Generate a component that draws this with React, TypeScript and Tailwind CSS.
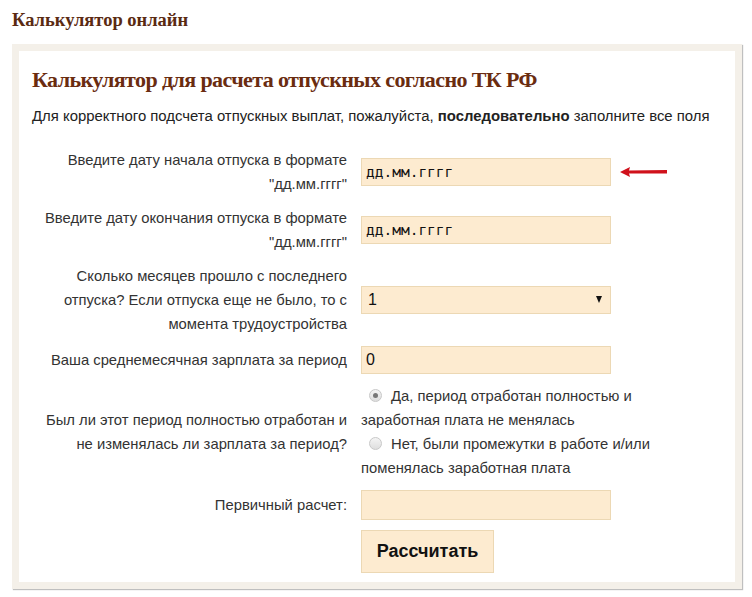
import { useState } from "react";

const sans = "font-['Liberation_Sans',Arial,sans-serif]";
const serif = "font-['Liberation_Serif','Times_New_Roman',serif]";

function Row({ label, children }: { label: React.ReactNode; children: React.ReactNode }) {
  return (
    <div className="flex items-center">
      <div className="w-[315px] shrink-0 text-right text-[14.8px] leading-[24px] text-[#333] whitespace-nowrap">
        {label}
      </div>
      <div className="ml-[14px] flex items-center">{children}</div>
    </div>
  );
}

function Radio({ checked }: { checked: boolean }) {
  return (
    <span className="relative mr-[9px] ml-[8px] inline-block h-[13px] w-[13px] rounded-full border border-[#c8c8c8] bg-gradient-to-b from-[#f4f4f4] to-[#dedede] align-[-1px]">
      {checked && (
        <span className="absolute left-[3px] top-[3px] h-[5px] w-[5px] rounded-full bg-[#777]" />
      )}
    </span>
  );
}

export default function App() {
  const [months, setMonths] = useState("1");
  const [full, setFull] = useState(true);

  const field =
    "h-[28px] w-[250px] border border-[#ecd8b4] bg-[#fdebd0] px-[4px] text-[#111] outline-none";

  return (
    <div className={`${sans} min-h-[597px] w-[752px] bg-white`}>
      <div className={`${serif} px-[12px] pt-[8px] text-[18.5px] font-bold leading-[24px] text-[#5a2a12]`}>
        Калькулятор онлайн
      </div>

      <div className="mt-[12px] ml-[12px] w-[730px] border-[7px] border-[#f4f0e9] shadow-[1px_1px_1px_rgba(0,0,0,0.25)]">
        <div className="bg-white px-[13px] pt-[14px] pb-[9px]">
          <h1 className={`${serif} text-[22px] font-bold leading-[30px] tracking-[-0.6px] text-[#6a2c10]`}>
            Калькулятор для расчета отпускных согласно ТК РФ
          </h1>
          <p className="mt-[9px] text-[14.9px] leading-[24px] text-[#222] whitespace-nowrap">
            Для корректного подсчета отпускных выплат, пожалуйста,{" "}
            <b>последовательно</b> заполните все поля
          </p>

          <div className="mt-[20px] flex flex-col gap-[10px]">
            <Row label={<>Введите дату начала отпуска в формате<br />"дд.мм.гггг"</>}>
              <input
                className={`${field} font-['DejaVu_Sans_Mono',monospace] text-[14.5px] placeholder:text-[#111]`}
                placeholder="дд.мм.гггг"
              />
              <svg width="56" height="12" viewBox="0 0 56 12" className="ml-[8px]">
                <path d="M1 6 L11 1 L10 4.6 L48 4 L48 7.4 L10 7.6 L11 11 Z" fill="#d0111b" />
              </svg>
            </Row>

            <Row label={<>Введите дату окончания отпуска в формате<br />"дд.мм.гггг"</>}>
              <input
                className={`${field} font-['DejaVu_Sans_Mono',monospace] text-[14.5px] placeholder:text-[#111]`}
                placeholder="дд.мм.гггг"
              />
            </Row>

            <Row
              label={
                <>
                  Сколько месяцев прошло с последнего
                  <br />
                  отпуска? Если отпуска еще не было, то с
                  <br />
                  момента трудоустройства
                </>
              }
            >
              <div className={`${field} relative flex items-center text-[16px]`}>
                <select
                  value={months}
                  onChange={(e) => setMonths(e.target.value)}
                  className="h-full w-full appearance-none bg-transparent pl-[2px] outline-none"
                >
                  {Array.from({ length: 12 }, (_, i) => (
                    <option key={i} value={String(i + 1)}>
                      {i + 1}
                    </option>
                  ))}
                </select>
                <span className="pointer-events-none absolute right-[8px] top-[9px] h-0 w-0 border-x-[3.5px] border-t-[7px] border-x-transparent border-t-[#111]" />
              </div>
            </Row>

            <Row label="Ваша среднемесячная зарплата за период">
              <input className={`${field} text-[16px]`} defaultValue="0" />
            </Row>

            <Row label={<>Был ли этот период полностью отработан и<br />не изменялась ли зарплата за период?</>}>
              <div className="w-[300px] text-[14.8px] leading-[24px] text-[#333]">
                <label className="block cursor-pointer" onClick={() => setFull(true)}>
                  <Radio checked={full} />
                  Да, период отработан полностью и заработная плата не менялась
                </label>
                <label className="block cursor-pointer" onClick={() => setFull(false)}>
                  <Radio checked={!full} />
                  Нет, были промежутки в работе и/или поменялась заработная плата
                </label>
              </div>
            </Row>

            <Row label="Первичный расчет:">
              <input className={`${field} h-[30px]`} readOnly />
            </Row>

            <div className="ml-[329px]">
              <button className="h-[43px] w-[133px] border border-[#ecd8b4] bg-[#fdebd0] text-[18px] font-bold text-[#111]">
                Рассчитать
              </button>
            </div>
          </div>
        </div>
      </div>
    </div>
  );
}
